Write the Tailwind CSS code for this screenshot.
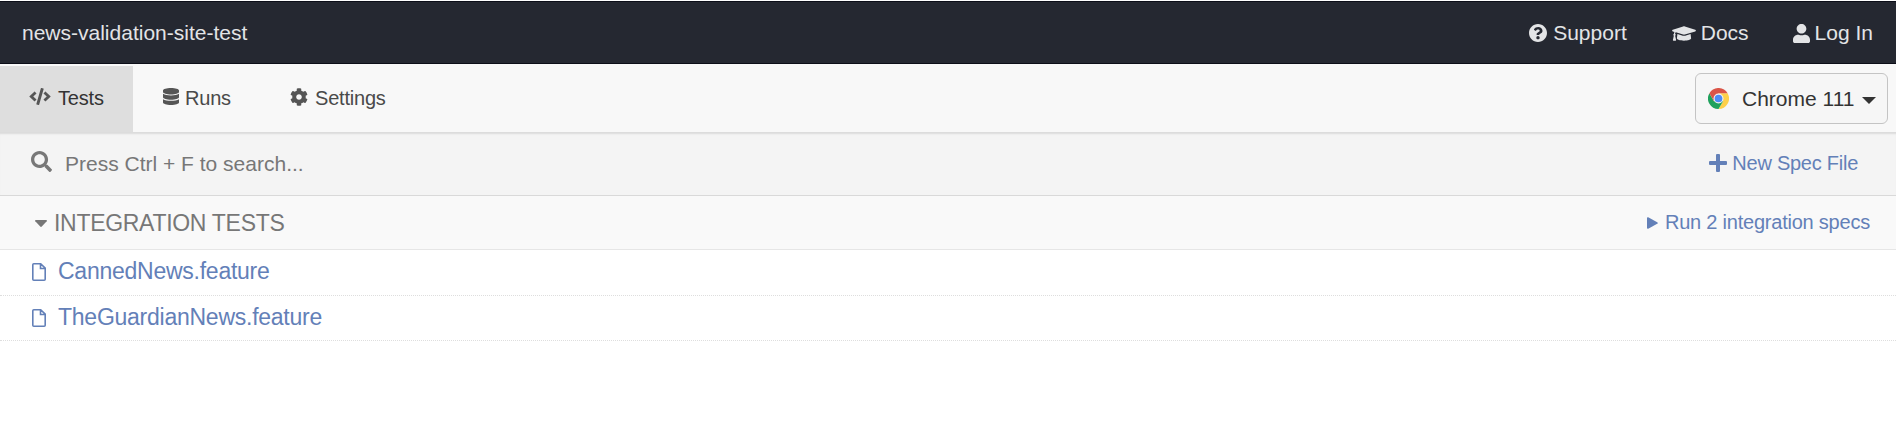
<!DOCTYPE html>
<html lang="en">
<head>
<meta charset="utf-8">
<title>news-validation-site-test</title>
<script src="https://cdn.jsdelivr.net/npm/@tailwindcss/browser@4"></script>
</head>
<body class="h-[438px] overflow-hidden bg-white font-['Liberation_Sans',Arial,sans-serif] text-[21px] leading-6 whitespace-nowrap">
<header class="mt-px flex h-[63px] items-center justify-between border-y border-[#0c0e18] bg-[#252831] pr-[23px] pl-[22px] text-[#e3e4e6]">
  <div>news-validation-site-test</div>
  <nav class="flex items-center">
    <a class="mr-[45px] flex items-center gap-[6px]"><svg class="size-[18px]" viewBox="8 8 496 496" fill="currentColor"><path d="M504 256c0 137-111 248-248 248S8 393 8 256 119 8 256 8s248 111 248 248zM262.700 90c-54.500 0-89.300 23-116.500 63.800-3.500 5.300-2.400 12.400 2.700 16.300l34.700 26.300c5.200 3.900 12.600 3 16.700-2.100 17.900-22.700 30.100-35.800 57.300-35.800 20.400 0 45.700 13.100 45.700 33 0 15-12.400 22.700-32.500 34C247.100 238.500 216 255 216 296v4c0 6.600 5.400 12 12 12h56c6.600 0 12-5.400 12-12v-1.300c0-28.700 83.800-29.900 83.800-107.500C379.800 132.700 319.200 90 262.700 90zM256 338c-25.400 0-46 20.600-46 46s20.600 46 46 46 46-20.600 46-46-20.600-46-46-46z"/></svg>Support</a>
    <a class="mr-[44px] flex items-center gap-[5px]"><svg class="mt-px h-[19px] w-[24px]" viewBox="0 0 640 512" fill="currentColor"><path d="M622.300 153.200L343.400 67.500c-15.200-4.700-31.600-4.700-46.800 0L17.700 153.200c-23.600 7.300-23.600 38.500 0 45.800l48.600 14.900c-10.700 13.200-17.200 29.300-17.800 46.900C38.800 266.300 32 276.300 32 288c0 10.800 5.700 19.900 14 25.700L20.600 428.500C18.400 438.500 26 448 36.200 448h55.600c10.200 0 17.800-9.500 15.600-19.500L82 313.700c8.300-5.800 14-14.900 14-25.700 0-11.400-6.500-21.100-15.700-26.900.8-15 8.400-28.200 20.700-36.700l195.700 60.200c9.100 2.800 26.400 6.600 46.800 0l279-85.700c23.500-7.200 23.500-38.400-.2-45.700zM352.800 315.100c-28.500 8.800-53.200 3.100-65.600 0L142.800 270.800 128 384c0 35.300 86 64 192 64s192-28.700 192-64l-14.200-113.200-145 44.300z"/></svg>Docs</a>
    <a class="flex items-center gap-[5px]"><svg class="mt-px h-[19px] w-[17px]" viewBox="0 0 448 512" preserveAspectRatio="none" fill="currentColor"><path d="M224 256c70.700 0 128-57.300 128-128S294.700 0 224 0 96 57.300 96 128s57.300 128 128 128zm89.600 32h-16.700c-22.200 10.200-46.900 16-72.900 16s-50.600-5.800-72.900-16h-16.700C60.200 288 0 348.200 0 422.400V464c0 26.500 21.500 48 48 48h352c26.500 0 48-21.500 48-48v-41.600c0-74.200-60.200-134.400-134.400-134.400z"/></svg>Log In</a>
  </nav>
</header>

<div class="flex h-[69px] items-stretch justify-between border-b border-[#dcdcdc] bg-[#f8f8f8] pt-[2px] text-[20px] tracking-[-0.2px] text-[#4a4a4a]">
  <nav class="flex">
    <a class="flex w-[133px] items-center bg-[#dedede] pb-[3px] pl-[29px] text-[#333]"><svg class="mr-[7px] mb-[2px] h-[17px] w-[22px] text-[#555]" viewBox="0 0 640 512" fill="currentColor"><path d="M278.900 511.500l-61-17.700c-6.400-1.800-10-8.500-8.200-14.900L346.200 8.700c1.800-6.400 8.500-10 14.900-8.200l61 17.700c6.400 1.800 10 8.500 8.200 14.900L293.800 503.300c-1.900 6.400-8.500 10.100-14.900 8.200zm-114-112.200l43.500-46.400c4.600-4.900 4.300-12.700-.8-17.200L117 256l90.600-79.700c5.100-4.500 5.500-12.300.8-17.200l-43.500-46.400c-4.500-4.800-12.100-5.100-17-.5L3.800 247.200c-5.100 4.700-5.100 12.800 0 17.500l144.100 135.100c4.900 4.600 12.500 4.400 17-.5zm327.200.6l144.100-135.100c5.100-4.700 5.100-12.800 0-17.500L492.100 112.100c-4.800-4.500-12.400-4.300-17 .5L431.600 159c-4.600 4.900-4.300 12.700.8 17.200L523 256l-90.600 79.700c-5.100 4.500-5.500 12.300-.8 17.200l43.500 46.400c4.500 4.900 12.100 5.100 17 .6z"/></svg>Tests</a>
    <a class="flex w-[127px] items-center pb-[3px] pl-[30px]"><svg class="mr-[6px] mb-[2px] h-[17px] w-[16px] text-[#555]" viewBox="0 0 448 512" preserveAspectRatio="none" fill="currentColor"><path d="M448 73.100v45.800C448 159.100 347.700 192 224 192S0 159.100 0 118.900V73.100C0 32.900 100.300 0 224 0s224 32.900 224 73.100zM448 176v102.900C448 319.100 347.700 352 224 352S0 319.100 0 278.900V176c48.100 33.100 136.200 48.600 224 48.600S399.900 209.100 448 176zm0 160v102.900C448 479.100 347.700 512 224 512S0 479.100 0 438.900V336c48.100 33.100 136.200 48.600 224 48.600S399.900 369.100 448 336z"/></svg>Runs</a>
    <a class="flex items-center pb-[3px] pl-[30px]"><svg class="mr-[7px] mb-[2px] size-[18px] text-[#555]" viewBox="0 0 512 512" fill="currentColor"><path d="M487.400 315.700l-42.600-24.600c4.300-23.200 4.300-47 0-70.200l42.600-24.600c4.900-2.800 7.100-8.600 5.500-14-11.100-35.600-30-67.800-54.700-94.600-3.800-4.100-10-5.100-14.800-2.300L380.800 110c-17.900-15.400-38.500-27.300-60.800-35.100V25.800c0-5.600-3.900-10.500-9.400-11.700-36.700-8.200-74.300-7.800-109.200 0-5.500 1.200-9.400 6.100-9.400 11.700V75c-22.200 7.900-42.800 19.800-60.800 35.100L88.700 85.500c-4.900-2.800-11-1.900-14.800 2.300-24.700 26.700-43.600 58.900-54.700 94.600-1.700 5.400.6 11.200 5.500 14L67.300 221c-4.300 23.200-4.300 47 0 70.200l-42.600 24.600c-4.900 2.800-7.100 8.600-5.500 14 11.100 35.600 30 67.800 54.700 94.600 3.800 4.100 10 5.100 14.800 2.300l42.600-24.600c17.900 15.400 38.500 27.300 60.800 35.100v49.200c0 5.600 3.900 10.500 9.400 11.700 36.700 8.200 74.300 7.800 109.200 0 5.500-1.200 9.400-6.100 9.400-11.700v-49.200c22.200-7.900 42.800-19.800 60.800-35.100l42.600 24.600c4.900 2.800 11 1.900 14.800-2.300 24.700-26.700 43.600-58.900 54.700-94.600 1.500-5.500-.7-11.300-5.600-14.100zM256 336c-44.100 0-80-35.900-80-80s35.900-80 80-80 80 35.900 80 80-35.900 80-80 80z"/></svg>Settings</a>
  </nav>
  <button class="mt-[7px] mr-[8px] flex h-[51px] w-[193px] items-center rounded-[6px] border border-[#c4c4c4] bg-[#f6f6f6] pl-[12px] text-[21px] tracking-normal text-[#333]"><svg class="mr-[13px] size-[21px]" viewBox="0 0 48 48"><path fill="#fdd04a" d="M24 12h20.800A24 24 0 0 1 24 48l10.400-18Z"/><path fill="#1fa15d" d="M3.200 12A24 24 0 0 0 24 48l10.400-18L24 24l-10.400 6Z"/><path fill="#da5447" d="M3.200 12 13.600 30 24 24V12h20.800A24 24 0 0 0 3.200 12Z"/><circle cx="24" cy="24" r="11.500" fill="#f1f1f1"/><circle cx="24" cy="24" r="8.800" fill="#4c8bf5"/></svg>Chrome 111<svg class="mt-[3px] ml-[8px] h-[7px] w-[14px]" viewBox="0 0 14 7" fill="#333"><path d="M0 0h14L7 7z"/></svg></button>
</div>

<div class="flex h-[63px] items-center justify-between border-b border-[#d9d9d9] bg-[#f4f4f4] pr-[38px] pl-[31px] text-[#777] shadow-[inset_0_2px_2px_-1px_rgba(0,0,0,0.1)]">
  <div class="flex items-center pb-[1px]"><svg class="mr-[13px] mb-[4px] size-[21px]" viewBox="0 0 512 512" fill="currentColor"><path d="M505 442.700L405.300 343c-4.500-4.500-10.600-7-17-7H372c27.600-35.300 44-79.700 44-128C416 93.100 322.900 0 208 0S0 93.100 0 208s93.100 208 208 208c48.300 0 92.700-16.400 128-44v16.300c0 6.400 2.500 12.500 7 17l99.700 99.700c9.400 9.400 24.600 9.400 33.900 0l28.300-28.300c9.400-9.400 9.400-24.600.1-34zM208 336c-70.700 0-128-57.200-128-128 0-70.700 57.200-128 128-128 70.700 0 128 57.200 128 128 0 70.700-57.200 128-128 128z"/></svg>Press Ctrl + F to search...</div>
  <a class="flex items-center pb-[2px] text-[20px] tracking-[-0.25px] text-[#6380b8]"><svg class="mr-[5px] size-[18px]" viewBox="0 0 18 18" fill="currentColor"><path d="M8 0h2q1 0 1 1v6h6q1 0 1 1v2q0 1-1 1h-6v6q0 1-1 1H8q-1 0-1-1v-6H1q-1 0-1-1V8q0-1 1-1h6V1q0-1 1-1z"/></svg>New Spec File</a>
</div>

<div class="flex h-[54px] items-center justify-between border-b border-[#e6e6e6] bg-[#f9f9f9] pr-[26px] pl-[35px] text-[23px] text-[#777]">
  <div class="flex items-center tracking-[-0.3px]"><svg class="mt-[2px] mr-[7px] h-[7px] w-[12px]" viewBox="0 0 12 7" fill="currentColor"><path d="M.8 0h10.400q1.200.2.500 1.200L6.800 6.600q-.8.700-1.600 0L.3 1.200Q-.4.200.8 0z"/></svg>INTEGRATION TESTS</div>
  <a class="flex items-center pb-px text-[20px] tracking-[-0.22px] text-[#6380b8]"><svg class="mt-[2px] mr-[7px] h-[12px] w-[11px]" viewBox="0 0 11 13" preserveAspectRatio="none" fill="currentColor"><path d="M0 1.200Q.1 0 1.200.4l9 5.200q1.400.9 0 1.800l-9 5.200Q.1 13 0 11.800z"/></svg>Run 2 integration specs</a>
</div>

<ul class="text-[23px] tracking-[-0.25px] text-[#6380b8]">
  <li class="flex h-[46px] items-center border-b border-dotted border-[#dedede] pb-[4px] pl-[32px]"><svg class="mt-[2px] mr-[12px] h-[18px] w-[14px]" viewBox="0 0 14 18" fill="none" stroke="currentColor" stroke-width="1.600"><path d="M1.800.8h6.900l4.500 4.400v11q0 1-1 1H1.800q-1 0-1-1V1.800q0-1 1-1zM8.500.8v4.700h4.700"/></svg>CannedNews.feature</li>
  <li class="flex h-[45px] items-center border-b border-dotted border-[#dedede] pb-[3px] pl-[32px]"><svg class="mt-[2px] mr-[12px] h-[18px] w-[14px]" viewBox="0 0 14 18" fill="none" stroke="currentColor" stroke-width="1.600"><path d="M1.800.8h6.900l4.500 4.400v11q0 1-1 1H1.800q-1 0-1-1V1.800q0-1 1-1zM8.500.8v4.700h4.700"/></svg>TheGuardianNews.feature</li>
</ul>
</body>
</html>
